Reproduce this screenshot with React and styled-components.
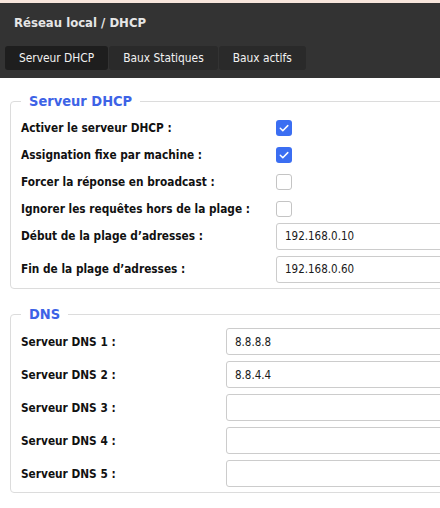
import React from "react";
import styled, { createGlobalStyle } from "styled-components";

const GlobalStyle = createGlobalStyle`
  html, body {
    margin: 0;
    padding: 0;
    background: #ffffff;
    overflow: hidden;
  }
  body {
    font-family: "DejaVu Sans Condensed", "DejaVu Sans", sans-serif;
    font-stretch: semi-condensed;
    color: #111;
  }
`;

const Page = styled.div`
  width: 720px;
`;

const TopStrip = styled.div`
  height: 3px;
  background: #f8e6dc;
`;

const Header = styled.header`
  background: #333333;
  padding: 12px 0 8px 5px;
`;

const Title = styled.h1`
  margin: 0 0 16px 9px;
  font-size: 13px;
  line-height: 15px;
  font-weight: bold;
  color: #e6e6e6;
`;

const Tabs = styled.nav`
  display: flex;
  gap: 1px;
`;

const Tab = styled.div`
  height: 24px;
  padding: 0 14px;
  display: flex;
  align-items: center;
  border-radius: 3px;
  font-size: 11.85px;
  color: #f2f2f2;
  background: ${(p) => (p.$active ? "#1e1e1e" : "#2a2a2a")};
`;

const Content = styled.main`
  padding: 0 0 0 10px;
`;

const Fieldset = styled.fieldset`
  margin: ${(p) => p.$top}px 0 0 0;
  padding: 5px 10px 5px 10px;
  border: 1px solid #dcdcdc;
  border-radius: 4px;
  min-width: 0;
`;

const Legend = styled.legend`
  padding: 0 8px;
  font-size: 14.5px;
  line-height: 17px;
  font-weight: bold;
  color: #3d63e6;
`;

const FieldList = styled.div`
  display: flex;
  flex-direction: column;
`;

const Row = styled.div`
  display: grid;
  grid-template-columns: ${(p) => p.$labelWidth}px 1fr;
  align-items: center;
  height: 27px;
  margin-top: ${(p) => (p.$spaced ? "6px" : "0")};
`;

const Label = styled.label`
  font-size: 11.75px;
  font-weight: bold;
  color: #111;
  white-space: nowrap;
`;

const CheckBox = styled.span`
  width: 16px;
  height: 16px;
  box-sizing: border-box;
  border-radius: 3px;
  display: flex;
  align-items: center;
  justify-content: center;
  background: ${(p) => (p.$checked ? "#3b6ef2" : "#ffffff")};
  border: ${(p) => (p.$checked ? "none" : "1.5px solid #c4c4c4")};
`;

const TextInput = styled.input`
  width: 260px;
  height: 27px;
  box-sizing: border-box;
  border: 1px solid #cccccc;
  border-radius: 3px;
  padding: 0 8px;
  font-family: "DejaVu Sans Condensed", "DejaVu Sans", sans-serif;
  font-stretch: semi-condensed;
  font-size: 11.5px;
  color: #1a1a1a;
  background: #fff;
  outline: none;
`;

const Check = ({ checked }) => (
  <CheckBox $checked={checked}>
    {checked && (
      <svg width="12" height="12" viewBox="0 0 12 12">
        <path
          d="M2.3 6.3 L4.8 8.7 L9.8 3.6"
          fill="none"
          stroke="#ffffff"
          strokeWidth="1.5"
          strokeLinecap="round"
          strokeLinejoin="round"
        />
      </svg>
    )}
  </CheckBox>
);

const dhcpFields = [
  { label: "Activer le serveur DHCP :", type: "check", value: true },
  { label: "Assignation fixe par machine :", type: "check", value: true },
  { label: "Forcer la réponse en broadcast :", type: "check", value: false },
  { label: "Ignorer les requêtes hors de la plage :", type: "check", value: false },
  { label: "Début de la plage d’adresses :", type: "text", value: "192.168.0.10" },
  { label: "Fin de la plage d’adresses :", type: "text", value: "192.168.0.60" },
];

const dnsFields = [
  { label: "Serveur DNS 1 :", type: "text", value: "8.8.8.8" },
  { label: "Serveur DNS 2 :", type: "text", value: "8.8.4.4" },
  { label: "Serveur DNS 3 :", type: "text", value: "" },
  { label: "Serveur DNS 4 :", type: "text", value: "" },
  { label: "Serveur DNS 5 :", type: "text", value: "" },
];

const Section = ({ title, fields, labelWidth, top }) => (
  <Fieldset $top={top}>
    <Legend>{title}</Legend>
    <FieldList>
      {fields.map((f, i) => (
        <Row
          key={f.label}
          $labelWidth={labelWidth}
          $spaced={i > 0 && f.type === "text" && fields[i - 1].type === "text"}
        >
          <Label>{f.label}</Label>
          {f.type === "check" ? (
            <Check checked={f.value} />
          ) : (
            <TextInput type="text" defaultValue={f.value} />
          )}
        </Row>
      ))}
    </FieldList>
  </Fieldset>
);

export default function App() {
  const tabs = ["Serveur DHCP", "Baux Statiques", "Baux actifs"];
  return (
    <>
      <GlobalStyle />
      <Page>
        <TopStrip />
        <Header>
          <Title>Réseau local / DHCP</Title>
          <Tabs>
            {tabs.map((t, i) => (
              <Tab key={t} $active={i === 0}>
                {t}
              </Tab>
            ))}
          </Tabs>
        </Header>
        <Content>
          <Section title="Serveur DHCP" fields={dhcpFields} labelWidth={255} top={14.5} />
          <Section title="DNS" fields={dnsFields} labelWidth={205} top={17.5} />
        </Content>
      </Page>
    </>
  );
}
